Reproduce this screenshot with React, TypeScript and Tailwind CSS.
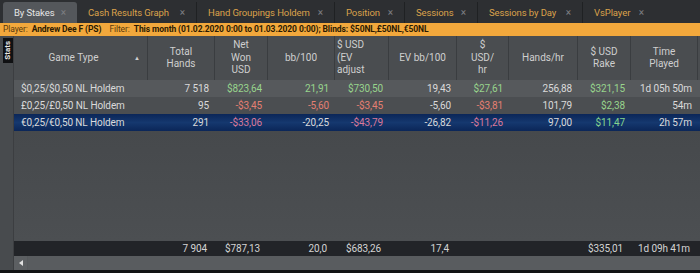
const tabs = [
  { label: "By Stakes", w: "w-[74px]", active: true },
  { label: "Cash Results Graph", w: "w-[120px]" },
  { label: "Hand Groupings Holdem", w: "w-[138px]" },
  { label: "Position", w: "w-[70px]" },
  { label: "Sessions", w: "w-[73px]" },
  { label: "Sessions by Day", w: "w-[105px]" },
  { label: "VsPlayer", w: "w-[72px]" },
];

const columns = [
  { lines: ["Game Type"], sort: true },
  { lines: ["Total", "Hands"] },
  { lines: ["Net", "Won", "USD"] },
  { lines: ["bb/100"] },
  { lines: ["$ USD", "(EV", "adjust"], left: true },
  { lines: ["EV bb/100"] },
  { lines: ["$", "USD/", "hr"] },
  { lines: ["Hands/hr"] },
  { lines: ["$ USD", "Rake"] },
  { lines: ["Time", "Played"] },
];

type Cell = { v: string; c?: "g" | "r" };

const rows: { bg: string; cells: Cell[]; selected?: boolean }[] = [
  {
    bg: "bg-[#56595c]",
    cells: [
      { v: "$0,25/$0,50 NL Holdem" },
      { v: "7 518" },
      { v: "$823,64", c: "g" },
      { v: "21,91", c: "g" },
      { v: "$730,50", c: "g" },
      { v: "19,43" },
      { v: "$27,61", c: "g" },
      { v: "256,88" },
      { v: "$321,15", c: "g" },
      { v: "1d 05h 50m" },
    ],
  },
  {
    bg: "bg-[#4b4e51]",
    cells: [
      { v: "£0,25/£0,50 NL Holdem" },
      { v: "95" },
      { v: "-$3,45", c: "r" },
      { v: "-5,60", c: "r" },
      { v: "-$3,45", c: "r" },
      { v: "-5,60" },
      { v: "-$3,81", c: "r" },
      { v: "101,79" },
      { v: "$2,38", c: "g" },
      { v: "54m" },
    ],
  },
  {
    bg: "bg-gradient-to-b from-[#0b2658] via-[#15386f] to-[#0b2658]",
    selected: true,
    cells: [
      { v: "€0,25/€0,50 NL Holdem" },
      { v: "291" },
      { v: "-$33,06", c: "r" },
      { v: "-20,25" },
      { v: "-$43,79", c: "r" },
      { v: "-26,82" },
      { v: "-$11,26", c: "r" },
      { v: "97,00" },
      { v: "$11,47", c: "g" },
      { v: "2h 57m" },
    ],
  },
];

const totals = ["", "7 904", "$787,13", "20,0", "$683,26", "17,4", "", "", "$335,01", "1d 09h 41m"];

const grid = "grid grid-cols-[134px_67px_53px_67px_54px_68px_52px_69px_53px_67px]";

function cellColor(c: Cell, selected?: boolean) {
  if (c.c === "g") return selected ? "text-[#86d58e]" : "text-[#98d48c]";
  if (c.c === "r") return selected ? "text-[#d9799a]" : "text-[#e47f72]";
  return "text-[#dadada]";
}

export default function App() {
  return (
    <div className="flex h-[273px] w-[700px] flex-col overflow-hidden bg-[#2d2f32] font-['Roboto',sans-serif] text-[10px]">
      {/* tab strip */}
      <div className="flex h-[23px] items-end pl-[3px]">
        {tabs.map((t, i) => (
          <div
            key={t.label}
            className={`flex h-[21px] items-center justify-between pl-[11px] pr-[11px] ${t.w} ${
              t.active ? "rounded-t-[3px] bg-[#54575b] text-[#e6e6e6]" : "text-[#dba24b]"
            } ${!t.active && i < tabs.length - 1 ? "border-r border-[#1f2123]" : ""}`}
          >
            <span className="text-[9.5px] leading-none tracking-[-0.1px] whitespace-nowrap">{t.label}</span>
            <span className="text-[10px] leading-none text-[#7d7f82]">×</span>
          </div>
        ))}
      </div>

      {/* filter bar */}
      <div className="flex h-[13px] items-center bg-[#f2a83c] pl-[3px] text-[8.5px] leading-none tracking-[-0.1px] whitespace-nowrap text-[#5a3a0c]">
        <span>Player:</span>
        <span className="ml-[4px] font-bold text-[#2b1a02]">Andrew Dee F (PS)</span>
        <span className="ml-[8px]">Filter:</span>
        <span className="ml-[4px] font-bold text-[#2b1a02]">
          This month (01.02.2020 0:00 to 01.03.2020 0:00); Blinds: $50NL,£50NL,€50NL
        </span>
      </div>

      <div className="flex flex-1">
        {/* side dock */}
        <div className="w-[14px] border-r border-[#3c3e41] bg-[#484b4e] pt-[2px] pl-[3px]">
          <div className="flex h-[25px] w-[10px] items-center justify-center bg-[#101113]">
            <span className="rotate-180 text-[8px] leading-none font-bold text-[#e8e8e8] [writing-mode:vertical-rl]">
              Stats
            </span>
          </div>
        </div>

        <div className="flex flex-1 flex-col bg-[#4a4d50]">
          {/* header */}
          <div className={`${grid} h-[44px] text-[#cfcfcf]`}>
            {columns.map((c, i) => (
              <div
                key={i}
                className={`relative flex flex-col justify-center overflow-hidden border-r border-[#3a3d40] text-[10px] leading-[12.5px] ${
                  c.left ? "items-start pl-[2px]" : "items-center"
                } ${c.sort ? "pr-[14px]" : ""}`}
              >
                {c.lines.map((l) => (
                  <span key={l} className="whitespace-nowrap">
                    {l}
                  </span>
                ))}
                {c.sort && (
                  <span className="absolute top-[19px] right-[7px] text-[6px] leading-none text-[#d0d0d0]">▲</span>
                )}
              </div>
            ))}
          </div>

          {/* rows */}
          {rows.map((r, ri) => (
            <div key={ri} className={`${grid} h-[17px] items-center ${r.bg}`}>
              {r.cells.map((c, ci) => (
                <div
                  key={ci}
                  className={`whitespace-nowrap leading-none tracking-[-0.1px] ${ci === 0 ? "pl-[7px] text-left" : "pr-[6px] text-right"} ${cellColor(
                    c,
                    r.selected
                  )}`}
                >
                  {c.v}
                </div>
              ))}
            </div>
          ))}

          <div className="flex-1 bg-gradient-to-b from-[#46494c] to-[#4c4f52]" />

          {/* totals */}
          <div className={`${grid} h-[15px] items-center bg-[#222428] text-[#d4d4d4]`}>
            {totals.map((t, i) => (
              <div key={i} className="pr-[8px] text-right leading-none tracking-[-0.1px] whitespace-nowrap">
                {t}
              </div>
            ))}
          </div>

          {/* horizontal scrollbar */}
          <div className="flex h-[14px] bg-[#56595c]">
            <div className="flex w-[13px] items-center justify-center bg-[#5c5f62]">
              <span className="h-0 w-0 border-y-[3px] border-r-[4px] border-y-transparent border-r-[#e0e0e0]" />
            </div>
            <div className="ml-[1px] flex-1 bg-[#595c5f]" />
          </div>
        </div>
      </div>

      <div className="h-[3px] bg-[#121314]" />
    </div>
  );
}
